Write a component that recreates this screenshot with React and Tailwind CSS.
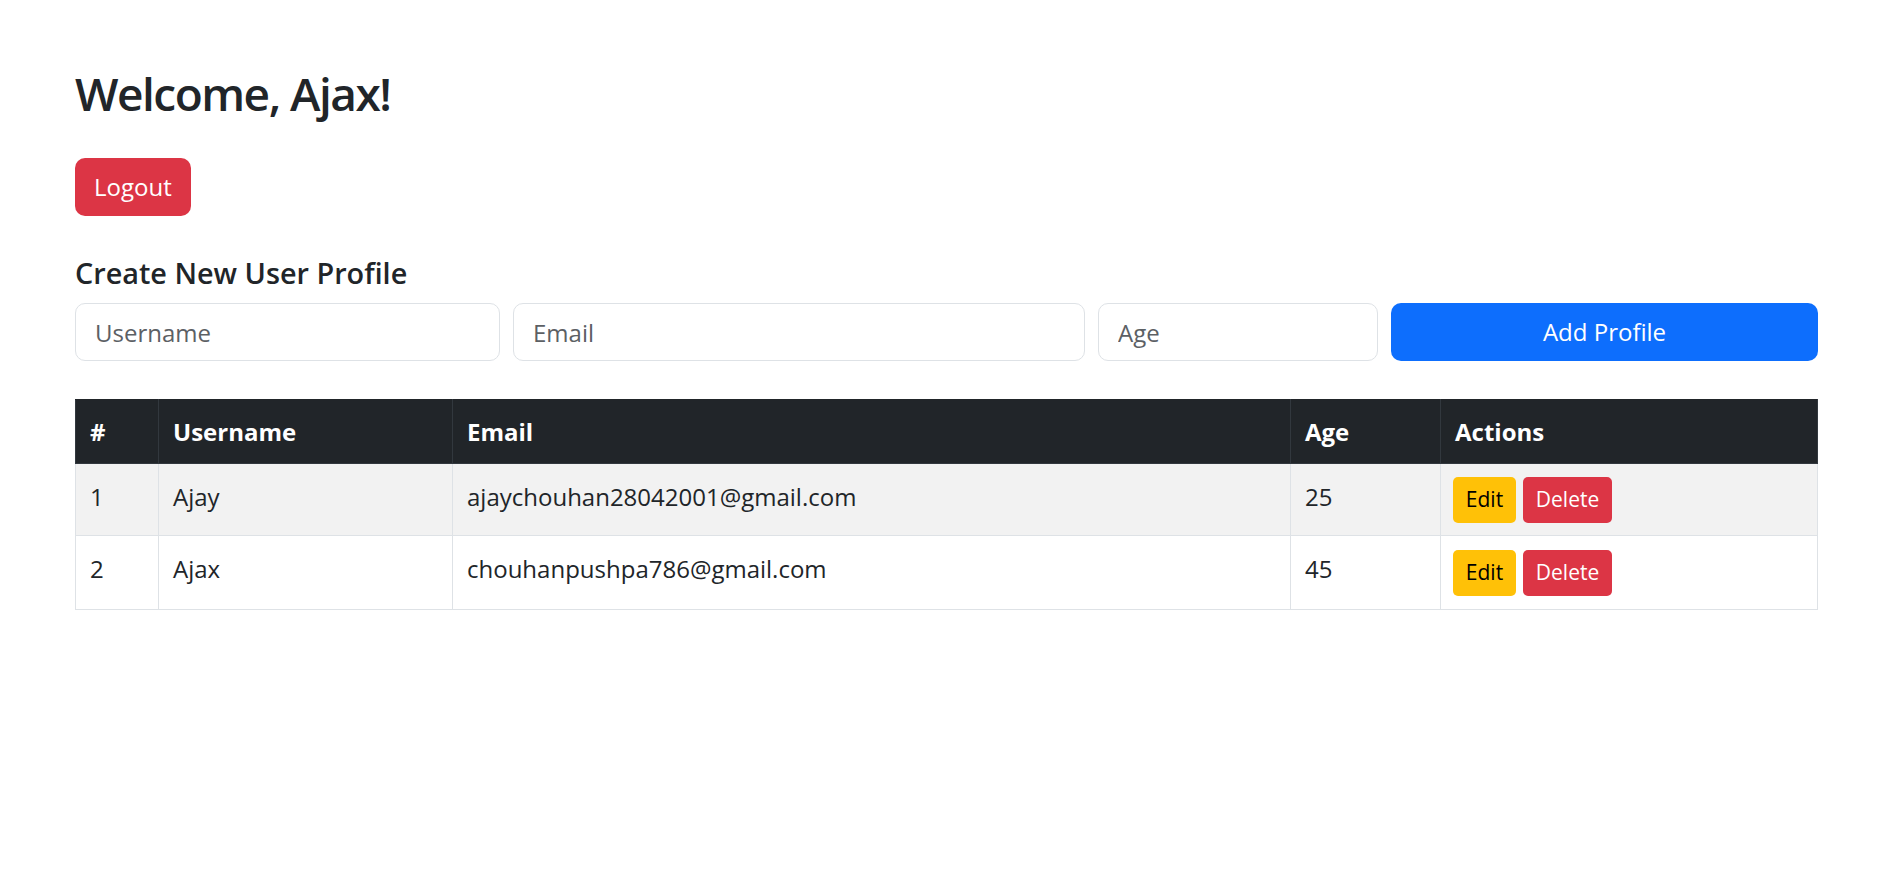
import React from "react";

const profiles = [
  { id: 1, username: "Ajay", email: "ajaychouhan28042001@gmail.com", age: 25 },
  { id: 2, username: "Ajax", email: "chouhanpushpa786@gmail.com", age: 45 },
];

export default function App() {
  return (
    <div className="min-h-screen bg-white text-[#212529] font-['Open_Sans',sans-serif]">
      <div className="ml-[75px] w-[1743px] pt-[65px]">
        <h1 className="text-[46px] font-semibold tracking-[-1.5px] leading-[1.25] mb-[35px]">Welcome, Ajax!</h1>

        <button className="h-[58px] px-[19px] rounded-[10px] bg-[#dc3545] text-white text-[24px] leading-none">
          Logout
        </button>

        <h4 className="mt-[40px] mb-[13px] text-[28.8px] font-semibold leading-[1.2]">
          Create New User Profile
        </h4>

        {/* form row */}
        <div className="grid grid-cols-[425px_572px_280px_1fr] gap-[13px]">
          <input
            placeholder="Username"
            className="h-[58px] px-[19px] border border-[#dee2e6] rounded-[10px] text-[24px] placeholder:text-[#5c6064] outline-none"
          />
          <input
            placeholder="Email"
            className="h-[58px] px-[19px] border border-[#dee2e6] rounded-[10px] text-[24px] placeholder:text-[#5c6064] outline-none"
          />
          <input
            placeholder="Age"
            className="h-[58px] px-[19px] border border-[#dee2e6] rounded-[10px] text-[24px] placeholder:text-[#5c6064] outline-none"
          />
          <button className="h-[58px] rounded-[10px] bg-[#0d6efd] text-white text-[24px]">
            Add Profile
          </button>
        </div>

        {/* profiles table */}
        <table className="mt-[38px] w-full table-fixed border-collapse text-[24px]">
          <colgroup>
            <col className="w-[83px]" />
            <col className="w-[294px]" />
            <col className="w-[838px]" />
            <col className="w-[150px]" />
            <col />
          </colgroup>
          <thead>
            <tr className="h-[64px] bg-[#212529] text-white font-bold text-left">
              <th className="px-[14px] border border-[#32383e] border-t-[#212529]">#</th>
              <th className="px-[14px] border border-[#32383e] border-t-[#212529]">Username</th>
              <th className="px-[14px] border border-[#32383e] border-t-[#212529]">Email</th>
              <th className="px-[14px] border border-[#32383e] border-t-[#212529]">Age</th>
              <th className="px-[14px] border border-[#32383e] border-t-[#212529]">Actions</th>
            </tr>
          </thead>
          <tbody>
            {profiles.map((p, i) => (
              <tr key={p.id} className={i % 2 === 0 ? "h-[72px] bg-[#f2f2f2]" : "h-[74px] bg-white"}>
                <td className="px-[14px] pt-[15px] border border-[#dee2e6] align-top">{p.id}</td>
                <td className="px-[14px] pt-[15px] border border-[#dee2e6] align-top">{p.username}</td>
                <td className="px-[14px] pt-[15px] border border-[#dee2e6] align-top">{p.email}</td>
                <td className="px-[14px] pt-[15px] border border-[#dee2e6] align-top">{p.age}</td>
                <td className="px-[12px] border border-[#dee2e6] align-middle">
                  <div className="flex gap-[7px]">
                    <button className="h-[46px] w-[63px] rounded-[5px] bg-[#ffc107] text-black text-[21px]">
                      Edit
                    </button>
                    <button className="h-[46px] w-[89px] rounded-[5px] bg-[#dc3545] text-white text-[21px]">
                      Delete
                    </button>
                  </div>
                </td>
              </tr>
            ))}
          </tbody>
        </table>
      </div>
    </div>
  );
}
